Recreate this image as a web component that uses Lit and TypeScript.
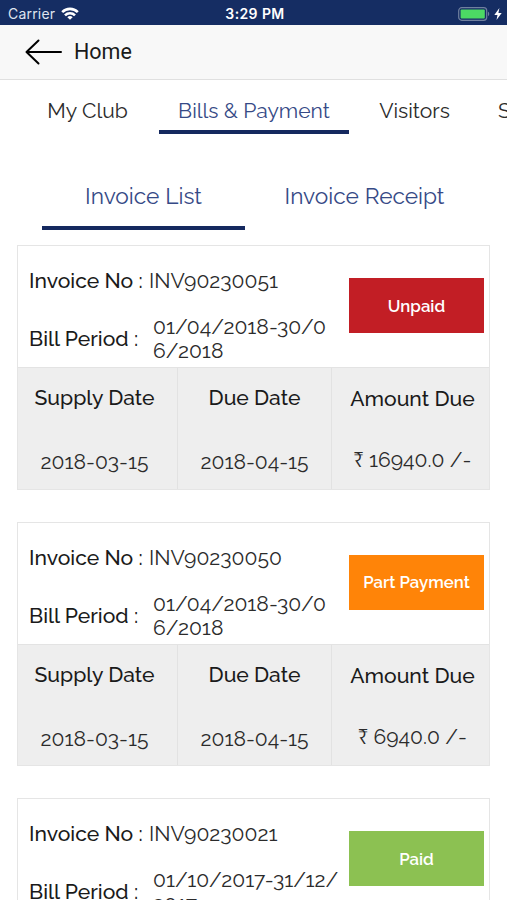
import { LitElement, html, css } from "lit";
import { customElement, property } from "lit/decorators.js";

interface Invoice {
  no: string;
  period: string;
  supply: string;
  due: string;
  amount: string;
  status: "unpaid" | "part" | "paid";
}

const STATUS_LABEL = { unpaid: "Unpaid", part: "Part Payment", paid: "Paid" };

const INVOICES: Invoice[] = [
  { no: "INV90230051", period: "01/04/2018-30/0\n6/2018", supply: "2018-03-15", due: "2018-04-15", amount: "16940.0", status: "unpaid" },
  { no: "INV90230050", period: "01/04/2018-30/0\n6/2018", supply: "2018-03-15", due: "2018-04-15", amount: "6940.0", status: "part" },
  { no: "INV90230021", period: "01/10/2017-31/12/\n2017", supply: "2017-09-15", due: "2017-10-15", amount: "5940.0", status: "paid" },
];

@customElement("status-bar")
export class StatusBar extends LitElement {
  static styles = css`
    :host {
      display: grid;
      grid-template-columns: 1fr auto 1fr;
      align-items: center;
      height: 25px;
      box-sizing: border-box;
      padding: 2px 5px 0 8px;
      background: #152d63;
      color: #fff;
      font: 400 14px/20px Inter, "Liberation Sans", sans-serif;
    }
    .left, .right { display: flex; align-items: center; }
    .left { gap: 6px; color: #dfe4ef; letter-spacing: 0.2px; }
    .time { font-weight: 600; font-size: 14px; letter-spacing: 0.4px; }
    .right { justify-content: flex-end; gap: 4px; }
    svg { display: block; }
  `;
  render() {
    return html`
      <div class="left">
        <span>Carrier</span>
        <svg width="18" height="13" viewBox="0 0 18 13" fill="none" stroke="#fff" stroke-width="2.6">
          <path d="M1.2 5.1 A11 11 0 0 1 16.8 5.1" />
          <path d="M4 8.4 A7 7 0 0 1 14 8.4" />
          <path d="M9 12.8 L6.3 10.2 A3.9 3.9 0 0 1 11.7 10.2 Z" fill="#fff" stroke="none" />
        </svg>
      </div>
      <div class="time">3:29 PM</div>
      <div class="right">
        <svg width="32" height="14" viewBox="0 0 32 14">
          <rect x="0.7" y="0.7" width="28" height="12.6" rx="3" fill="none" stroke="#70809f" stroke-width="1.2" />
          <rect x="2.6" y="2.6" width="24.2" height="8.8" rx="1" fill="#4cd964" />
          <path d="M30 4.8 C31.6 5.4 31.6 8.6 30 9.2 Z" fill="#70809f" />
        </svg>
        <svg width="8" height="12" viewBox="0 0 8 12">
          <path d="M5.4 0 L0.3 6.9 H3.5 L2.5 12 L7.7 4.9 H4.4 Z" fill="#fff" />
        </svg>
      </div>
    `;
  }
}

@customElement("invoice-card")
export class InvoiceCard extends LitElement {
  @property({ attribute: false }) invoice!: Invoice;

  static styles = css`
    :host {
      display: block;
      box-sizing: border-box;
      height: 244.5px;
      border: 1px solid #e5e5e5;
      background: #fff;
      font: 400 21.1px/24px Raleway, Lato, sans-serif;
      color: #2b2b2b;
    }
    .top {
      display: grid;
      grid-template-columns: 1fr 135px;
      align-items: start;
      height: 122.3px;
      box-sizing: border-box;
      border-bottom: 1px solid #e3e3e3;
      padding: 23px 5px 0 11px;
    }
    .label { color: #1a1a1a; font-weight: 500; white-space: nowrap; }
    .no { display: flex; gap: 6px; }
    .no .label { width: 114px; }
    .period { display: flex; align-items: center; margin-top: 22px; }
    .period .label { width: 124px; }
    .period .value { white-space: pre; }
    .status {
      margin-top: 9px;
      height: 55px;
      display: flex;
      align-items: center;
      justify-content: center;
      color: #fff;
      font-weight: 600;
      font-size: 16.8px;
    }
    .unpaid { background: #c21e25; }
    .part { background: #ff8408; }
    .paid { background: #8cc152; }
    .bottom {
      display: grid;
      grid-template-columns: 159px 154px 1fr;
      height: 120.2px;
      background: #eee;
    }
    .cell {
      display: flex;
      flex-direction: column;
      align-items: center;
      padding-top: 18px;
      gap: 40px;
    }
    .cell + .cell { border-left: 1px solid #e2e2e2; }
    .cell.left { padding-right: 6px; }
    .cell.amount { padding-top: 19px; padding-left: 4px; gap: 37px; }
  `;
  render() {
    const i = this.invoice;
    return html`
      <div class="top">
        <div>
          <div class="no"><span class="label">Invoice No :</span><span>${i.no}</span></div>
          <div class="period"><span class="label">Bill Period :</span><span class="value">${i.period}</span></div>
        </div>
        <div class="status ${i.status}">${STATUS_LABEL[i.status]}</div>
      </div>
      <div class="bottom">
        <div class="cell left"><span class="label">Supply Date</span><span>${i.supply}</span></div>
        <div class="cell"><span class="label">Due Date</span><span>${i.due}</span></div>
        <div class="cell amount"><span class="label">Amount Due</span><span>₹ ${i.amount} /-</span></div>
      </div>
    `;
  }
}

@customElement("app-root")
export class AppRoot extends LitElement {
  static styles = css`
    :host {
      display: block;
      height: 900px;
      overflow: hidden;
      background: #fff;
      font: 400 21.1px/24px Raleway, Lato, sans-serif;
      color: #2b2b2b;
    }
    .nav {
      display: flex;
      align-items: center;
      gap: 12px;
      height: 55px;
      box-sizing: border-box;
      padding-left: 25px;
      background: #f8f8f8;
      border-bottom: 1.5px solid #e0e0e0;
      font: 400 21.5px/26px Roboto, sans-serif;
      color: #1a1a1a;
    }
    .tabs {
      display: flex;
      height: 54px;
      padding-left: 16px;
      overflow: hidden;
      white-space: nowrap;
    }
    .tab {
      box-sizing: border-box;
      flex: none;
      padding-top: 19px;
      text-align: center;
      border-bottom: 4px solid transparent;
    }
    .club { width: 143px; }
    .bills { width: 190px; }
    .visitors { width: 131px; }
    .staff { padding-left: 18px; }
    .sub {
      display: flex;
      gap: 18px;
      margin-top: 32px;
      padding-left: 42px;
      height: 64px;
    }
    .subtab {
      box-sizing: border-box;
      width: 203px;
      padding-top: 17px;
      text-align: center;
      font-size: 22.7px;
      line-height: 26px;
      color: #364a86;
      border-bottom: 4px solid transparent;
    }
    .active { border-bottom-color: #15295f; color: #364a86; }
    .list {
      display: flex;
      flex-direction: column;
      gap: 32px;
      padding: 15.2px 17px 0 17px;
    }
    invoice-card { flex: none; }
    svg { display: block; }
  `;
  render() {
    return html`
      <status-bar></status-bar>
      <div class="nav">
        <svg width="37" height="26" viewBox="0 0 37 26" fill="none" stroke="#000" stroke-width="2" stroke-linecap="round" stroke-linejoin="round">
          <path d="M13.5 1.5 L1.5 13 L13.5 24.5 M1.5 13 H36" />
        </svg>
        <span>Home</span>
      </div>
      <div class="tabs">
        <div class="tab club">My Club</div>
        <div class="tab bills active">Bills &amp; Payment</div>
        <div class="tab visitors">Visitors</div>
        <div class="tab staff">S</div>
      </div>
      <div class="sub">
        <div class="subtab active">Invoice List</div>
        <div class="subtab">Invoice Receipt</div>
      </div>
      <div class="list">
        ${INVOICES.map((i) => html`<invoice-card .invoice=${i}></invoice-card>`)}
      </div>
    `;
  }
}
